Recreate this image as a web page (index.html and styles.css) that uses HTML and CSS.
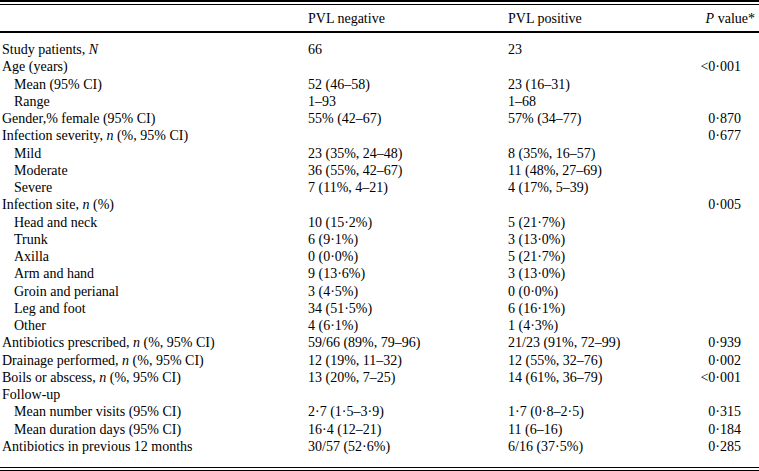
FILE: index.html
```html
<!DOCTYPE html>
<html>
<head>
<meta charset="utf-8">
<link rel="stylesheet" href="styles.css">
</head>
<body>
<div class="page">
  <div class="frame">
    <table class="data">
      <colgroup>
        <col class="c1"><col class="c2"><col class="c3"><col class="c4">
      </colgroup>
      <thead>
        <tr>
          <th class="lab"></th>
          <th>PVL negative</th>
          <th>PVL positive</th>
          <th class="pv"><i>P</i> value*</th>
        </tr>
      </thead>
      <tbody>
        <tr class="first"><td>Study patients, <i>N</i></td><td>66</td><td>23</td><td class="pv"></td></tr>
        <tr><td>Age (years)</td><td></td><td></td><td class="pv">&lt;0·001</td></tr>
        <tr><td class="sub">Mean (95% CI)</td><td>52 (46–58)</td><td>23 (16–31)</td><td class="pv"></td></tr>
        <tr><td class="sub">Range</td><td>1–93</td><td>1–68</td><td class="pv"></td></tr>
        <tr><td>Gender,% female (95% CI)</td><td>55% (42–67)</td><td>57% (34–77)</td><td class="pv">0·870</td></tr>
        <tr><td>Infection severity, <i>n</i> (%, 95% CI)</td><td></td><td></td><td class="pv">0·677</td></tr>
        <tr><td class="sub">Mild</td><td>23 (35%, 24–48)</td><td>8 (35%, 16–57)</td><td class="pv"></td></tr>
        <tr><td class="sub">Moderate</td><td>36 (55%, 42–67)</td><td>11 (48%, 27–69)</td><td class="pv"></td></tr>
        <tr><td class="sub">Severe</td><td>7 (11%, 4–21)</td><td>4 (17%, 5–39)</td><td class="pv"></td></tr>
        <tr><td>Infection site, <i>n</i> (%)</td><td></td><td></td><td class="pv">0·005</td></tr>
        <tr><td class="sub">Head and neck</td><td>10 (15·2%)</td><td>5 (21·7%)</td><td class="pv"></td></tr>
        <tr><td class="sub">Trunk</td><td>6 (9·1%)</td><td>3 (13·0%)</td><td class="pv"></td></tr>
        <tr><td class="sub">Axilla</td><td>0 (0·0%)</td><td>5 (21·7%)</td><td class="pv"></td></tr>
        <tr><td class="sub">Arm and hand</td><td>9 (13·6%)</td><td>3 (13·0%)</td><td class="pv"></td></tr>
        <tr><td class="sub">Groin and perianal</td><td>3 (4·5%)</td><td>0 (0·0%)</td><td class="pv"></td></tr>
        <tr><td class="sub">Leg and foot</td><td>34 (51·5%)</td><td>6 (16·1%)</td><td class="pv"></td></tr>
        <tr><td class="sub">Other</td><td>4 (6·1%)</td><td>1 (4·3%)</td><td class="pv"></td></tr>
        <tr><td>Antibiotics prescribed, <i>n</i> (%, 95% CI)</td><td>59/66 (89%, 79–96)</td><td>21/23 (91%, 72–99)</td><td class="pv">0·939</td></tr>
        <tr><td>Drainage performed, <i>n</i> (%, 95% CI)</td><td>12 (19%, 11–32)</td><td>12 (55%, 32–76)</td><td class="pv">0·002</td></tr>
        <tr><td>Boils or abscess, <i>n</i> (%, 95% CI)</td><td>13 (20%, 7–25)</td><td>14 (61%, 36–79)</td><td class="pv">&lt;0·001</td></tr>
        <tr><td>Follow-up</td><td></td><td></td><td class="pv"></td></tr>
        <tr><td class="sub">Mean number visits (95% CI)</td><td>2·7 (1·5–3·9)</td><td>1·7 (0·8–2·5)</td><td class="pv">0·315</td></tr>
        <tr><td class="sub">Mean duration days (95% CI)</td><td>16·4 (12–21)</td><td>11 (6–16)</td><td class="pv">0·184</td></tr>
        <tr class="last"><td>Antibiotics in previous 12 months</td><td>30/57 (52·6%)</td><td>6/16 (37·5%)</td><td class="pv">0·285</td></tr>
      </tbody>
    </table>
  </div>
</div>
</body>
</html>
```

FILE: styles.css
```css
html, body {
  margin: 0;
  padding: 0;
  background: #ffffff;
}

.page {
  width: 759px;
  font-family: "Liberation Serif", "Times New Roman", serif;
  font-size: 14px;
  color: #000000;
}

/* double rule top (thick + thin) and bottom (thin + thick) */
.frame {
  border-top: 2px solid #000000;
  border-bottom: 2px solid #000000;
  padding: 2px 0;
}

.data {
  width: 759px;
  border-collapse: separate;
  border-spacing: 0;
  table-layout: fixed;
  border-top: 1px solid #000000;
  border-bottom: 1px solid #000000;
}

.c1 { width: 306px; }
.c2 { width: 200px; }
.c3 { width: 190px; }
.c4 { width: 63px; }

.data th {
  font-weight: normal;
  text-align: left;
  height: 26px;
  padding: 0 0 0 2px;
  border-bottom: 2px solid #000000;
  line-height: 17px;
  white-space: nowrap;
  vertical-align: middle;
}

.data th.pv {
  text-align: right;
  padding-right: 4px;
}

.data td {
  padding: 0 0 0 2px;
  height: 17.25px;
  line-height: 17.25px;
  white-space: nowrap;
  vertical-align: middle;
}

.data td.sub {
  padding-left: 14px;
}

.data td.pv {
  text-align: right;
  padding-right: 18px;
}

.data tr.first td {
  padding-top: 8px;
}

.data tr.last td {
  padding-bottom: 12px;
}
```
